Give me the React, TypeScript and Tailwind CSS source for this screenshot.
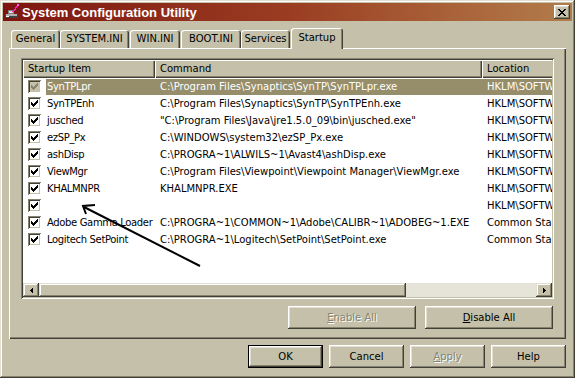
import React from 'react';

const rows: { name: string; cmd: string; loc: string; sel?: boolean }[] = [
  { name: 'SynTPLpr', cmd: 'C:\\Program Files\\Synaptics\\SynTP\\SynTPLpr.exe', loc: 'HKLM\\SOFTWARE\\Microsoft\\Windows\\CurrentVersion\\Run', sel: true },
  { name: 'SynTPEnh', cmd: 'C:\\Program Files\\Synaptics\\SynTP\\SynTPEnh.exe', loc: 'HKLM\\SOFTWARE\\Microsoft\\Windows\\CurrentVersion\\Run' },
  { name: 'jusched', cmd: '"C:\\Program Files\\Java\\jre1.5.0_09\\bin\\jusched.exe"', loc: 'HKLM\\SOFTWARE\\Microsoft\\Windows\\CurrentVersion\\Run' },
  { name: 'ezSP_Px', cmd: 'C:\\WINDOWS\\system32\\ezSP_Px.exe', loc: 'HKLM\\SOFTWARE\\Microsoft\\Windows\\CurrentVersion\\Run' },
  { name: 'ashDisp', cmd: 'C:\\PROGRA~1\\ALWILS~1\\Avast4\\ashDisp.exe', loc: 'HKLM\\SOFTWARE\\Microsoft\\Windows\\CurrentVersion\\Run' },
  { name: 'ViewMgr', cmd: 'C:\\Program Files\\Viewpoint\\Viewpoint Manager\\ViewMgr.exe', loc: 'HKLM\\SOFTWARE\\Microsoft\\Windows\\CurrentVersion\\Run' },
  { name: 'KHALMNPR', cmd: 'KHALMNPR.EXE', loc: 'HKLM\\SOFTWARE\\Microsoft\\Windows\\CurrentVersion\\Run' },
  { name: '', cmd: '', loc: 'HKLM\\SOFTWARE\\Microsoft\\Windows\\CurrentVersion\\Run' },
  { name: 'Adobe Gamma Loader', cmd: 'C:\\PROGRA~1\\COMMON~1\\Adobe\\CALIBR~1\\ADOBEG~1.EXE', loc: 'Common Startup' },
  { name: 'Logitech SetPoint', cmd: 'C:\\PROGRA~1\\Logitech\\SetPoint\\SetPoint.exe', loc: 'Common Startup' },
];

function Check({ grey }: { grey?: boolean }) {
  return (
    <div
      className={`w-[13px] h-[13px] flex items-start justify-start pl-[3px] pt-[3px] shadow-[inset_1px_1px_0_#87836f,inset_-1px_-1px_0_#ffffff,inset_2px_2px_0_#404038,inset_-2px_-2px_0_#c4c0a9] ${grey ? 'bg-[#c4c0a9]' : 'bg-white'}`}
    >
      <svg width="7" height="7" viewBox="0 0 7 7" shapeRendering="crispEdges">
        <g fill={grey ? '#87836f' : '#000'}>
          <rect x="0" y="2" width="1" height="3" />
          <rect x="1" y="3" width="1" height="3" />
          <rect x="2" y="4" width="1" height="3" />
          <rect x="3" y="3" width="1" height="3" />
          <rect x="4" y="2" width="1" height="3" />
          <rect x="5" y="1" width="1" height="3" />
          <rect x="6" y="0" width="1" height="3" />
        </g>
      </svg>
    </div>
  );
}

function Btn({ children, w, disabled, def }: { children: React.ReactNode; w: string; disabled?: boolean; def?: boolean }) {
  const inner = (
    <div
      className={`${def ? 'w-full h-full' : w + ' h-[23px]'} bg-[#c4c0a9] flex items-center justify-center leading-[14px] shadow-[inset_-1px_-1px_0_#404038,inset_1px_1px_0_#ffffff,inset_-2px_-2px_0_#87836f,inset_2px_2px_0_#e2dfd2] ${disabled ? 'text-[#87836f] [text-shadow:1px_1px_0_#ffffff]' : 'text-black'}`}
    >
      {children}
    </div>
  );
  if (def) {
    return <div className={`${w} h-[23px] border border-black`}>{inner}</div>;
  }
  return inner;
}

function Tab({ label, cls }: { label: string; cls: string }) {
  return (
    <div
      className={`${cls} h-[18px] rounded-t-[3px] bg-[#c4c0a9] flex items-center justify-center shadow-[inset_1px_1px_0_#ffffff,inset_-1px_0_0_#404038,inset_-2px_0_0_#87836f]`}
    >
      {label}
    </div>
  );
}

export default function App() {
  return (
    <div className="w-[575px] h-[384px] bg-white text-[10px] leading-none text-black" style={{ fontFamily: '"DejaVu Sans", Tahoma, sans-serif' }}>
      <div className="relative w-[575px] h-[378px] bg-[#c4c0a9] p-[3px] flex flex-col shadow-[inset_-1px_-1px_0_#404038,inset_1px_1px_0_#e2dfd2,inset_-2px_-2px_0_#87836f,inset_2px_2px_0_#ffffff]">
        {/* Title bar */}
        <div className="h-[18px] flex items-center bg-gradient-to-r from-[#7e1410] via-[#9a3c22] to-[#b27c4a] pl-[1px] pr-[2px]">
          <svg width="16" height="16" viewBox="0 0 16 16" shapeRendering="crispEdges">
            <rect x="1" y="10" width="13" height="4" fill="#404040" />
            <rect x="2" y="10" width="11" height="2" fill="#b0b0b0" />
            <rect x="4" y="6" width="6" height="4" fill="#808080" />
            <rect x="5" y="7" width="4" height="2" fill="#e0e0e0" />
            <rect x="2" y="12" width="3" height="1" fill="#ffffff" />
            <line x1="9" y1="8" x2="14" y2="1" stroke="#ff20c0" strokeWidth="1.5" />
            <rect x="13" y="0" width="2" height="2" fill="#ff60e0" />
          </svg>
          <span className="ml-[2px] text-white font-bold text-[13px]" style={{ fontFamily: '"Liberation Sans", Arial, sans-serif' }}>
            System Configuration Utility
          </span>
          <div className="ml-auto w-[16px] h-[14px] bg-[#c4c0a9] flex items-center justify-center shadow-[inset_-1px_-1px_0_#404038,inset_1px_1px_0_#ffffff,inset_-2px_-2px_0_#87836f,inset_2px_2px_0_#e2dfd2]">
            <svg width="8" height="7" viewBox="0 0 8 7" shapeRendering="crispEdges">
              <g fill="#000">
                <rect x="0" y="0" width="2" height="1" /><rect x="6" y="0" width="2" height="1" />
                <rect x="1" y="1" width="2" height="1" /><rect x="5" y="1" width="2" height="1" />
                <rect x="2" y="2" width="4" height="1" />
                <rect x="3" y="3" width="2" height="1" />
                <rect x="2" y="4" width="4" height="1" />
                <rect x="1" y="5" width="2" height="1" /><rect x="5" y="5" width="2" height="1" />
                <rect x="0" y="6" width="2" height="1" /><rect x="6" y="6" width="2" height="1" />
              </g>
            </svg>
          </div>
        </div>

        {/* Tabs */}
        <div className="mt-[7px] h-[20px] flex items-end pl-[8px]">
          <Tab label="General" cls="w-[49px]" />
          <Tab label="SYSTEM.INI" cls="w-[69px]" />
          <Tab label="WIN.INI" cls="w-[50px] ml-[1px]" />
          <Tab label="BOOT.INI" cls="w-[60px] ml-[1px]" />
          <Tab label="Services" cls="w-[49px]" />
          <div className="relative z-10 ml-[1px] w-[52px] h-[21px] mb-[-1px] rounded-t-[3px] bg-[#c4c0a9] flex items-center justify-center pb-[2px] shadow-[inset_1px_1px_0_#ffffff,inset_-1px_0_0_#404038,inset_-2px_0_0_#87836f]">
            Startup
          </div>
        </div>

        {/* Panel */}
        <div className="mx-[6px] h-[291px] pt-[10px] px-[12px] flex flex-col shadow-[inset_1px_1px_0_#ffffff,inset_-1px_-1px_0_#404038,inset_-2px_-2px_0_#87836f]">
          {/* List view */}
          <div className="h-[241px] p-[2px] bg-white flex flex-col shadow-[inset_1px_1px_0_#87836f,inset_-1px_-1px_0_#ffffff,inset_2px_2px_0_#404038,inset_-2px_-2px_0_#c4c0a9]">
            <div className="h-[18px] flex bg-[#c4c0a9] overflow-hidden">
              <div className="w-[132px] shrink-0 flex items-center pl-[5px] shadow-[inset_1px_1px_0_#ffffff,inset_-1px_-1px_0_#404038,inset_-2px_-2px_0_#87836f]">Startup Item</div>
              <div className="w-[327px] shrink-0 flex items-center pl-[5px] shadow-[inset_1px_1px_0_#ffffff,inset_-1px_-1px_0_#404038,inset_-2px_-2px_0_#87836f]">Command</div>
              <div className="w-[100px] shrink-0 flex items-center pl-[5px] shadow-[inset_1px_1px_0_#ffffff,inset_-1px_-1px_0_#404038,inset_-2px_-2px_0_#87836f]">Location</div>
            </div>
            <div className="flex-1 flex flex-col overflow-hidden">
              {rows.map((r, i) => (
                <div key={i} className="h-[17px] flex items-center whitespace-nowrap">
                  <div className="w-[23px] shrink-0 pl-[5px] flex items-center">
                    <Check grey={r.sel} />
                  </div>
                  <div className={`flex-1 h-[16px] flex items-center overflow-hidden leading-[14px] ${r.sel ? 'bg-[#968e6a] text-white' : ''}`}>
                    <div className="w-[109px] shrink-0 pl-[1px] overflow-hidden tracking-[-0.35px]">{r.name}</div>
                    <div className="w-[327px] shrink-0 pl-[5px] overflow-hidden">{r.cmd}</div>
                    <div className="w-[100px] shrink-0 pl-[5px] overflow-hidden">{r.loc}</div>
                  </div>
                </div>
              ))}
            </div>
            {/* Horizontal scrollbar */}
            <div className="h-[14px] flex bg-[#e6e3d8]">
              <div className="w-[16px] bg-[#c4c0a9] flex items-center justify-center shadow-[inset_-1px_-1px_0_#404038,inset_1px_1px_0_#e2dfd2,inset_-2px_-2px_0_#87836f,inset_2px_2px_0_#ffffff]">
                <svg width="3" height="5" viewBox="0 0 3 5" shapeRendering="crispEdges"><path d="M3 0 L0 2.5 L3 5 Z" fill="#000" /></svg>
              </div>
              <div className="w-[367px] bg-[#c4c0a9] shadow-[inset_-1px_-1px_0_#404038,inset_1px_1px_0_#e2dfd2,inset_-2px_-2px_0_#87836f,inset_2px_2px_0_#ffffff]" />
              <div className="flex-1" />
              <div className="w-[16px] bg-[#c4c0a9] flex items-center justify-center shadow-[inset_-1px_-1px_0_#404038,inset_1px_1px_0_#e2dfd2,inset_-2px_-2px_0_#87836f,inset_2px_2px_0_#ffffff]">
                <svg width="3" height="5" viewBox="0 0 3 5" shapeRendering="crispEdges"><path d="M0 0 L3 2.5 L0 5 Z" fill="#000" /></svg>
              </div>
            </div>
          </div>
          <div className="mt-[7px] flex justify-end gap-[9px] pr-[1px]">
            <Btn w="w-[128px]" disabled><span><span className="underline">E</span>nable All</span></Btn>
            <Btn w="w-[128px]"><span><span className="underline">D</span>isable All</span></Btn>
          </div>
        </div>

        {/* Bottom buttons */}
        <div className="mt-[6px] mr-[6px] flex justify-end gap-[6px]">
          <Btn w="w-[75px]" def>OK</Btn>
          <Btn w="w-[75px]">Cancel</Btn>
          <Btn w="w-[75px]" disabled><span><span className="underline">A</span>pply</span></Btn>
          <Btn w="w-[75px]">Help</Btn>
        </div>

        {/* Annotation arrow */}
        <svg className="absolute left-0 top-0 pointer-events-none" width="575" height="378">
          <line x1="200" y1="266" x2="84" y2="207" stroke="#000" strokeWidth="2" />
          <polyline points="95,205 83,206 86,214" fill="none" stroke="#000" strokeWidth="2" />
        </svg>
      </div>
    </div>
  );
}
